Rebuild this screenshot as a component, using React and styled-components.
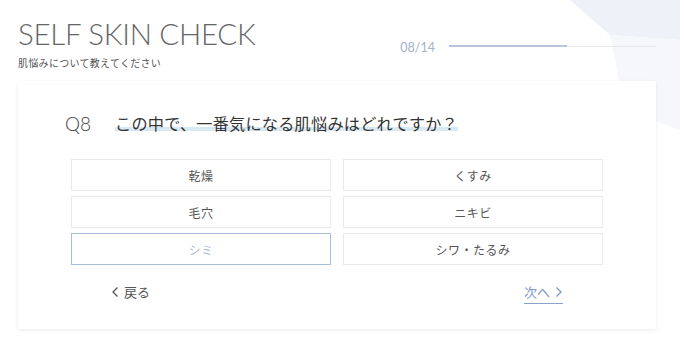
import React, { useState } from "react";
import styled, { createGlobalStyle } from "styled-components";

const GlobalStyle = createGlobalStyle`
  html, body {
    margin: 0;
    padding: 0;
    background: #fff;
  }
  body {
    font-family: "Noto Sans CJK JP", "Noto Sans", sans-serif;
    color: #444;
  }
`;

const Page = styled.div`
  position: relative;
  width: 680px;
  height: 352px;
  overflow: hidden;
  background: #fff;
`;

const Decor = styled.svg`
  position: absolute;
  top: 0;
  right: 0;
  z-index: 0;
`;

const Content = styled.div`
  position: relative;
  z-index: 1;
  padding: 16px 24px 0 18px;
`;

const Header = styled.header`
  display: flex;
  align-items: flex-start;
  justify-content: space-between;
  height: 65px;
`;

const TitleBlock = styled.div`
  display: flex;
  flex-direction: column;
`;

const Title = styled.h1`
  margin: 0;
  font-family: "Lato", "Inter", sans-serif;
  font-weight: 300;
  font-size: 29.5px;
  line-height: 36px;
  letter-spacing: -0.3px;
  color: #666;
`;

const Subtitle = styled.p`
  margin: 4px 0 0;
  font-size: 10px;
  line-height: 14px;
  color: #555;
  letter-spacing: 0.3px;
`;

const Progress = styled.div`
  display: flex;
  align-items: center;
  gap: 14px;
  margin-top: 21px;
`;

const Count = styled.span`
  font-family: "Lato", "Inter", sans-serif;
  font-weight: 400;
  font-size: 12.5px;
  color: #a4b1cf;
  padding-top: 3px;
`;

const Track = styled.div`
  position: relative;
  width: 207px;
  height: 1px;
  background: #e3e8f1;
`;

const Fill = styled.div`
  height: 2px;
  margin-top: -0.5px;
  background: #b7c4dc;
`;

const Card = styled.main`
  width: 638px;
  height: 248px;
  box-sizing: border-box;
  background: #fff;
  box-shadow: 0 1px 4px rgba(0, 0, 0, 0.08);
  padding-top: 30px;
`;

const Question = styled.div`
  display: flex;
  align-items: center;
  padding: 0 47px;
  height: 24px;
`;

const QNum = styled.span`
  font-family: "Lato", "Inter", sans-serif;
  font-weight: 300;
  font-size: 19px;
  color: #3f3f3f;
  width: 50px;
`;

const QText = styled.span`
  font-size: 16.2px;
  line-height: 24px;
  color: #333;
  letter-spacing: 0.2px;
  background: linear-gradient(transparent 68%, #d9e9f4 68%, #d9e9f4 82%, transparent 82%);
`;

const Options = styled.div`
  display: grid;
  grid-template-columns: 260px 260px;
  column-gap: 12px;
  row-gap: 5px;
  margin-top: 24px;
  padding: 0 53px;
`;

const Option = styled.button`
  height: 32px;
  box-sizing: border-box;
  border: 1px solid ${(p) => (p.$active ? "#a8bedc" : "#eaeaea")};
  background: #fff;
  font-family: "Noto Sans CJK JP", sans-serif;
  font-size: 12px;
  letter-spacing: 0.5px;
  color: ${(p) => (p.$active ? "#a9bbd6" : "#555")};
  cursor: pointer;
  padding: 0;
`;

const Nav = styled.nav`
  display: flex;
  justify-content: space-between;
  align-items: center;
  padding: 0 93px;
  margin-top: 17px;
`;

const NavButton = styled.button`
  display: flex;
  align-items: center;
  gap: 4px;
  border: none;
  background: none;
  padding: 0 0 2px;
  font-family: "Noto Sans CJK JP", sans-serif;
  font-size: 13px;
  color: ${(p) => (p.$primary ? "#7c98c6" : "#555")};
  border-bottom: 1px solid ${(p) => (p.$primary ? "#8aa3cd" : "transparent")};
  cursor: pointer;
`;

const Chevron = ({ dir }) => (
  <svg width="9" height="12" viewBox="0 0 9 12" fill="none">
    <path
      d={dir === "left" ? "M6.5 1.5 L2 6 L6.5 10.5" : "M2.5 1.5 L7 6 L2.5 10.5"}
      stroke="currentColor"
      strokeWidth="1.3"
    />
  </svg>
);

const options = ["乾燥", "くすみ", "毛穴", "ニキビ", "シミ", "シワ・たるみ"];

export default function App() {
  const [selected, setSelected] = useState("シミ");
  return (
    <Page>
      <GlobalStyle />
      <Decor width="130" height="130" viewBox="0 0 130 130">
        <polygon points="20,0 130,0 130,40 60,35" fill="#eef2f8" />
        <polygon points="60,35 130,40 130,130 75,110" fill="#f5f7fb" />
      </Decor>
      <Content>
        <Header>
          <TitleBlock>
            <Title>SELF SKIN CHECK</Title>
            <Subtitle>肌悩みについて教えてください</Subtitle>
          </TitleBlock>
          <Progress>
            <Count>08/14</Count>
            <Track>
              <Fill style={{ width: `${(8 / 14) * 100}%` }} />
            </Track>
          </Progress>
        </Header>
        <Card>
          <Question>
            <QNum>Q8</QNum>
            <QText>この中で、一番気になる肌悩みはどれですか？</QText>
          </Question>
          <Options>
            {options.map((o) => (
              <Option key={o} $active={selected === o} onClick={() => setSelected(o)}>
                {o}
              </Option>
            ))}
          </Options>
          <Nav>
            <NavButton>
              <Chevron dir="left" />
              戻る
            </NavButton>
            <NavButton $primary>
              次へ
              <Chevron dir="right" />
            </NavButton>
          </Nav>
        </Card>
      </Content>
    </Page>
  );
}
